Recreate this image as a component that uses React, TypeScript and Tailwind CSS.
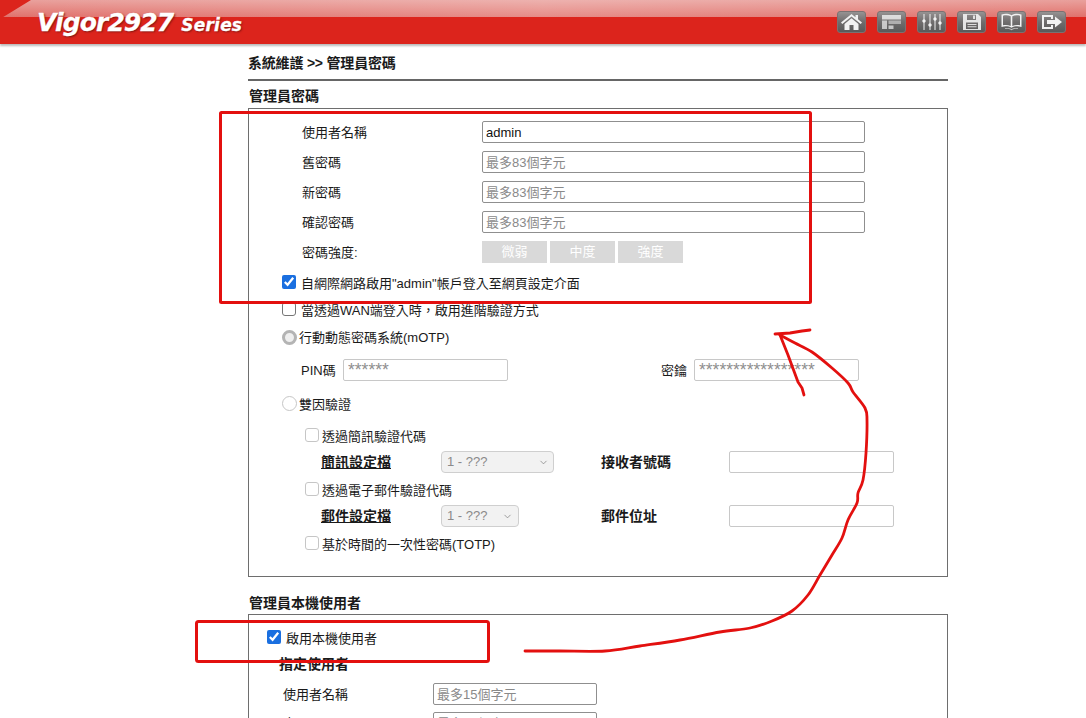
import React from "react";
import { ChevronDown } from "lucide-react";

const FONT = "font-['Liberation_Sans','Noto_Sans_CJK_TC',sans-serif]";

function Tile({ children }: { children: React.ReactNode }) {
  return (
    <div className="w-[29px] h-[22px] rounded-[3px] bg-gradient-to-b from-[#969292] via-[#6f6d6d] to-[#5a5a5a] border border-[#7a7272] flex items-center justify-center">
      <svg width="23" height="18" viewBox="0 0 23 18" fill="#f2f2f2" stroke="none">{children}</svg>
    </div>
  );
}

function Header() {
  return (
    <div className="relative h-[44px] bg-[#dc241c] shadow-[0_2px_2px_#bbb] overflow-hidden">
      <div className="h-[17px] bg-gradient-to-b from-[#e9a09c] to-[#e0716c] [clip-path:polygon(31px_0,100%_0,100%_100%,0_100%,0_19px)]" />
      <div className="absolute left-0 top-0 right-0 h-[17px] bg-gradient-to-r from-transparent via-[#ffffff30] to-transparent [clip-path:polygon(31px_0,100%_0,100%_100%,0_100%,0_19px)]" />
      <div className="absolute left-[37px] top-[8px] flex items-baseline font-['DejaVu_Sans',sans-serif] italic font-bold text-white [-webkit-text-stroke:0.3px_white] [text-shadow:1px_1px_2px_#7a1410]">
        <span className="text-[25px] leading-[30px] tracking-[-0.9px]">Vigor2927</span>
        <span className="text-[17px] ml-[8px] tracking-[0.2px]">Series</span>
      </div>
      <div className="absolute right-[20px] top-[11px] flex gap-[11px]">
        <Tile>
          <path d="M11.5 1 1 9.5l1.3 1.5L11.5 3.5l9.2 7.5L22 9.5 18 6.2V2h-2.500v2.200z" />
          <path d="M4.500 11 11.500 5.200 18.500 11v6h-5v-5h-4v5h-5z" />
        </Tile>
        <Tile>
          <path d="M2 2h19v4.500H2z" opacity=".8" />
          <path d="M2 7.500h5V16H2z" opacity=".7" />
          <path d="M8.500 7.500H21V11H8.500z" opacity=".5" />
          <path d="M8.500 12.500h5V16h-5z" opacity=".7" />
        </Tile>
        <Tile>
          <path d="M3.500 1h1v5.300a1.800 1.800 0 0 1 0 3.400V17h-1V9.700a1.800 1.800 0 0 1 0-3.400zM9.500 1h1v9.300a1.800 1.800 0 0 1 0 3.400V17h-1v-3.300a1.800 1.800 0 0 1 0-3.400zM14.500 1h1v3.300a1.800 1.800 0 0 1 0 3.400V17h-1V7.700a1.800 1.800 0 0 1 0-3.400zM19.500 1h1v7.300a1.800 1.800 0 0 1 0 3.400V17h-1v-5.300a1.800 1.800 0 0 1 0-3.400z" />
        </Tile>
        <Tile>
          <path fillRule="evenodd" d="M3 1h15l3 3v13H3zM7 1.800v5.200h9V1.800zM6 9.500V16h12V9.500z" opacity=".9" />
          <path d="M13 2.500h2v3.500h-2zM7.500 11h9v1h-9zM7.500 13.200h9v1h-9z" opacity=".85" />
        </Tile>
        <Tile>
          <path fillRule="evenodd" d="M1.500 1.500c3.500-1.100 7-.9 10 .8 3-1.700 6.500-1.900 10-.8V14c-3.500-1-7-1-10 .8-3-1.800-6.500-1.800-10-.8zM3 2.700v9.500c2.800-.5 5.400-.3 7.700 .8V3.300C8.500 2.200 5.800 2 3 2.700zM20 2.700c-2.800-.7-5.500-.5-7.700 .6V13c2.300-1.100 4.900-1.300 7.700-.8z" />
          <path d="M5 15c2.500-.3 4.700 0 6.500 1 1.800-1 4-1.300 6.500-1v.8c-2.500-.2-4.500.2-6.500 1.400-2-1.200-4-1.600-6.500-1.400z" opacity=".7" />
        </Tile>
        <Tile>
          <path d="M2 2h11v4h-2V4H4v10h7v-2h2v4H2z" />
          <path d="M7 7h8V3.500L22 9l-7 5.500V11H7z" />
        </Tile>
      </div>
    </div>
  );
}

function Field({ value, placeholder, w = "w-[383px]" }: { value?: string; placeholder?: string; w?: string }) {
  return (
    <input
      readOnly
      value={value}
      placeholder={placeholder}
      className={`${w} h-[22px] border border-[#8f8f8f] rounded-[2px] px-[3px] text-[13px] text-[#111] placeholder:text-[#8a8a8a] outline-none`}
    />
  );
}

function Muted({ placeholder, w = "w-[165px]" }: { placeholder?: string; w?: string }) {
  return (
    <input
      disabled
      placeholder={placeholder}
      className={`${w} h-[22px] border border-[#c8c8c8] rounded-[2px] bg-white px-[4px] text-[17.5px] font-normal placeholder:text-[#8f8f8f] outline-none`}
    />
  );
}

function Check({ checked }: { checked?: boolean }) {
  return <input type="checkbox" readOnly checked={!!checked} className="w-[14px] h-[14px] m-0 mb-[4px] accent-[#1a6fe0] shrink-0" />;
}

function Unchecked() {
  return <input type="checkbox" readOnly checked={false} className="appearance-none w-[14px] h-[14px] m-0 mb-[4px] border border-[#767676] rounded-[3px] bg-white shrink-0" />;
}

function Muted2() {
  return <input type="checkbox" disabled className="appearance-none w-[14px] h-[14px] m-0 mb-[4px] border border-[#c6c6c6] rounded-[3px] bg-white shrink-0" />;
}

function Pick({ w, arrow }: { w: string; arrow: string }) {
  return (
    <div className={`relative ${w}`}>
      <select disabled className="appearance-none w-full h-[22px] border border-[#cfcfcf] rounded-[4px] bg-[#f2f2f2] pl-[5px] text-[13px] font-normal text-[#8a8a8a] opacity-100">
        <option>1 - ???</option>
      </select>
      <ChevronDown size={11} strokeWidth={1.5} className={`absolute top-[6px] ${arrow} text-[#777]`} />
    </div>
  );
}

function StrengthChip({ children }: { children: React.ReactNode }) {
  return (
    <div className="w-[65px] h-[22px] bg-[#d9d9d9] text-white text-[13px] flex items-center justify-center">{children}</div>
  );
}

function Row({ label, children, className = "" }: { label: string; children: React.ReactNode; className?: string }) {
  return (
    <div className={`flex items-center h-[22px] pl-[53px] ${className}`}>
      <span className="w-[180px] text-[13px] pt-[2px]">{label}</span>
      {children}
    </div>
  );
}

const ARROW: [number, number][] = [
  [525, 651], [560, 651], [605, 651], [640, 646], [680, 640], [720, 632], [750, 628], [772, 621], [792, 611],
  [808, 595], [820, 575], [832, 555], [842, 538], [848, 520], [857, 503], [858, 493], [863, 480], [866, 453],
  [867, 420], [865, 408], [853, 392], [848, 383], [832, 368], [812, 352], [795, 343], [780, 335],
];

function smooth(points: [number, number][]) {
  let d = `M${points[0][0]} ${points[0][1]}`;
  for (let i = 0; i < points.length - 1; i++) {
    const p0 = points[Math.max(i - 1, 0)];
    const p1 = points[i];
    const p2 = points[i + 1];
    const p3 = points[Math.min(i + 2, points.length - 1)];
    d += ` C${p1[0] + (p2[0] - p0[0]) / 6} ${p1[1] + (p2[1] - p0[1]) / 6} ${p2[0] - (p3[0] - p1[0]) / 6} ${p2[1] - (p3[1] - p1[1]) / 6} ${p2[0]} ${p2[1]}`;
  }
  return d;
}

function Ink() {
  return (
    <svg className="absolute left-0 top-0 pointer-events-none" width="1086" height="718" fill="none" stroke="#e3100f">
      <rect x="220.500" y="112.500" width="590" height="190" strokeWidth="3" rx="1" />
      <rect x="196.500" y="621.500" width="292" height="40" strokeWidth="3" rx="2" />
      <path strokeWidth="2.800" strokeLinecap="round" strokeLinejoin="round" d={smooth(ARROW)} />
      <path strokeWidth="2.800" strokeLinecap="round" strokeLinejoin="round" d="M775 334 L790 333 L802 331 L810 330" />
      <path strokeWidth="2.800" strokeLinecap="round" strokeLinejoin="round" d="M780 335 L788 355 L798 382 L802 388 L804 395" />
    </svg>
  );
}

export default function App() {
  return (
    <div className={`relative w-[1086px] h-[718px] overflow-hidden bg-white text-[#1a1a1a] ${FONT}`}>
      <Header />
      <main className="ml-[248px] w-[700px]">
        <h1 className="h-[35px] pt-[11px] text-[14px] leading-[17px] font-bold tracking-[-0.2px]">系統維護 &gt;&gt; 管理員密碼</h1>
        <div className="h-[2px] bg-[#666]" />
        <h2 className="h-[27px] pt-[7px] pl-[1px] text-[14px] leading-[17px] font-bold">管理員密碼</h2>

        <section className="border border-[#6e6e6e] h-[469px] pt-[12px]">
          <Row label="使用者名稱"><Field value="admin" /></Row>
          <Row label="舊密碼" className="mt-[8px]"><Field placeholder="最多83個字元" /></Row>
          <Row label="新密碼" className="mt-[8px]"><Field placeholder="最多83個字元" /></Row>
          <Row label="確認密碼" className="mt-[8px]"><Field placeholder="最多83個字元" /></Row>
          <Row label="密碼強度:" className="mt-[8px]">
            <div className="flex gap-[3px]">
              <StrengthChip>微弱</StrengthChip>
              <StrengthChip>中度</StrengthChip>
              <StrengthChip>強度</StrengthChip>
            </div>
          </Row>
          <label className="mt-[9px] h-[22px] pl-[33px] pt-[1px] flex items-center gap-[5px] text-[13px]">
            <Check checked />自網際網路啟用"admin"帳戶登入至網頁設定介面
          </label>
          <label className="mt-[5px] h-[22px] pl-[33px] pt-[2px] flex items-center gap-[5px] text-[13px]">
            <Unchecked />當透過WAN端登入時，啟用進階驗證方式
          </label>
          <label className="mt-[6px] h-[22px] pl-[33px] flex items-center gap-[2px] text-[13px]">
            <input type="radio" disabled className="appearance-none w-[15px] h-[15px] m-0 mb-[2px] rounded-full border-[3px] border-[#b4b4b4] bg-[#efefef]" />行動動態密碼系統(mOTP)
          </label>
          <div className="mt-[10px] h-[22px] pl-[52px] flex items-center text-[13px]">
            <span className="w-[42px] pt-[2px]">PIN碼</span>
            <Muted placeholder="******" />
            <span className="ml-[153px] w-[33px] pt-[2px]">密鑰</span>
            <Muted placeholder="*****************" />
          </div>
          <label className="mt-[12px] h-[22px] pl-[33px] pt-[2px] flex items-center gap-[2px] text-[13px]">
            <input type="radio" disabled className="appearance-none w-[15px] h-[15px] m-0 mb-[4px] rounded-full border border-[#c6c6c6] bg-white" />雙因驗證
          </label>
          <label className="mt-[10px] h-[22px] pl-[56px] pt-[2px] flex items-center gap-[3px] text-[13px]">
            <Muted2 />透過簡訊驗證代碼
          </label>
          <div className="mt-[4px] h-[22px] pl-[72px] flex items-center text-[14px] font-bold">
            <span className="w-[120px] underline">簡訊設定檔</span>
            <Pick w="w-[113px]" arrow="right-[5px]" />
            <span className="ml-[47px] w-[128px]">接收者號碼</span>
            <Muted />
          </div>
          <label className="mt-[6px] h-[22px] pl-[56px] pt-[2px] flex items-center gap-[3px] text-[13px]">
            <Muted2 />透過電子郵件驗證代碼
          </label>
          <div className="mt-[4px] h-[22px] pl-[72px] flex items-center text-[14px] font-bold">
            <span className="w-[120px] underline">郵件設定檔</span>
            <Pick w="w-[78px]" arrow="right-[6px]" />
            <span className="ml-[82px] w-[128px]">郵件位址</span>
            <Muted />
          </div>
          <label className="mt-[6px] h-[22px] pl-[56px] pt-[2px] flex items-center gap-[3px] text-[13px]">
            <Muted2 />基於時間的一次性密碼(TOTP)
          </label>
        </section>

        <h2 className="h-[37px] pt-[18px] pl-[1px] text-[14px] leading-[17px] font-bold">管理員本機使用者</h2>

        <section className="border border-[#6e6e6e] pt-[12px] pb-[20px]">
          <label className="h-[22px] pl-[18px] pt-[2px] flex items-center gap-[5px] text-[13px]">
            <Check checked />啟用本機使用者
          </label>
          <div className="mt-[4px] h-[22px] pl-[30px] flex items-center text-[14px] font-bold">指定使用者</div>
          <div className="mt-[8px] h-[22px] pl-[34px] flex items-center text-[13px]">
            <span className="w-[150px] pt-[2px]">使用者名稱</span>
            <Field placeholder="最多15個字元" w="w-[164px]" />
          </div>
          <div className="mt-[7px] h-[22px] pl-[34px] flex items-center text-[13px]">
            <span className="w-[150px] pt-[2px]">密碼</span>
            <Field placeholder="最多15個字元" w="w-[164px]" />
          </div>
        </section>
      </main>
      <Ink />
    </div>
  );
}
